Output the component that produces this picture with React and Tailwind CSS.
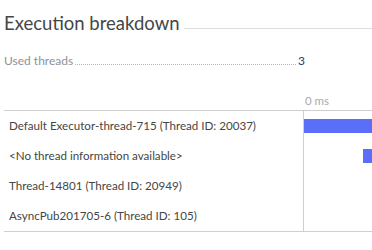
import React from "react";

const threads = [
  { name: "Default Executor-thread-715 (Thread ID: 20037)", start: 0, width: 200 },
  { name: "<No thread information available>", start: 59, width: 200 },
  { name: "Thread-14801 (Thread ID: 20949)", start: null },
  { name: "AsyncPub201705-6 (Thread ID: 105)", start: null },
];

export default function App() {
  return (
    <div
      className="w-[372px] h-[250px] overflow-hidden bg-white pl-[4px]"
      style={{ fontFamily: "Lato, 'Open Sans', sans-serif" }}
    >
      {/* Header */}
      <div className="flex items-end pt-[13px]">
        <h2 className="text-[18.5px] leading-[20px] text-[#454646] pr-[4px]">
          Execution breakdown
        </h2>
        <div className="flex-1 h-px bg-[#dedede] mb-[4px]" />
      </div>

      {/* Used threads */}
      <div className="flex items-end w-[301px] mt-[21px] text-[12px] leading-[14px]">
        <span className="text-[#8d929a]">Used threads</span>
        <span className="flex-1 border-b border-dotted border-[#b5b5b5] mx-[2px] mb-[3px]" />
        <span className="text-[#2b3d6b]">3</span>
      </div>

      {/* Breakdown table */}
      <div className="mt-[26px]">
        <div className="flex">
          <div className="w-[299px]" />
          <div className="pl-[2px] text-[11.5px] leading-[14px] text-[#a9aaad]">0 ms</div>
        </div>
        <div className="mt-[2px] border-t border-b border-[#cfcfcf]">
          {threads.map((t) => (
            <div key={t.name} className="flex h-[30px]">
              <div className="w-[299px] flex items-center pl-[5px] text-[11.6px] text-[#454646] whitespace-nowrap">
                {t.name}
              </div>
              <div className="flex-1 border-l border-[#cfcfcf] flex items-center overflow-hidden">
                {t.start !== null && (
                  <div
                    className="h-[14px] bg-[#5a6ef8] shrink-0"
                    style={{ marginLeft: t.start, width: t.width }}
                  />
                )}
              </div>
            </div>
          ))}
        </div>
      </div>
    </div>
  );
}
